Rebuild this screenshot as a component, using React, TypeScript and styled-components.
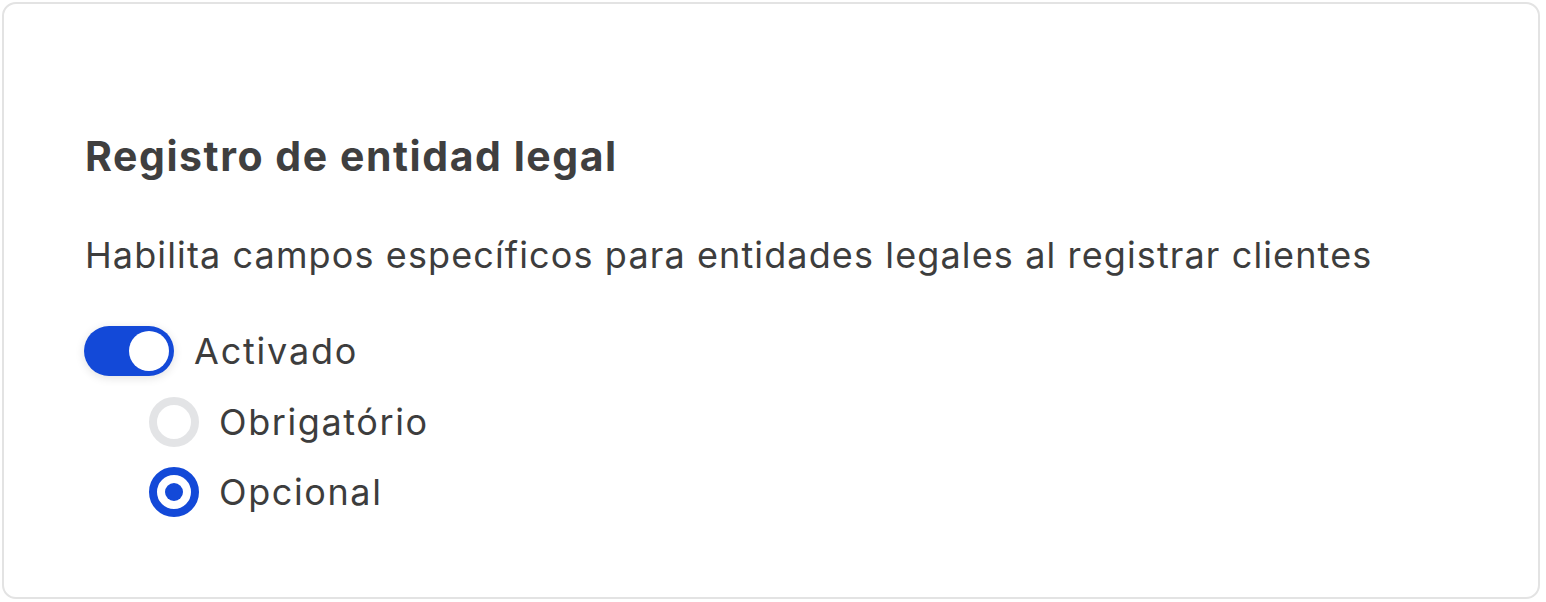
import React from "react";
import styled, { createGlobalStyle } from "styled-components";

const Global = createGlobalStyle`
  html, body { margin: 0; padding: 0; background: #ffffff; }
  body { font-family: Inter, "Noto Sans", sans-serif; color: #3d3d3d; }
`;

const Page = styled.div`
  padding: 2px 6px 3px 2px;
`;

const Card = styled.section`
  box-sizing: border-box;
  height: 597px;
  border: 2px solid #e3e3e3;
  border-radius: 14px;
  background: #ffffff;
  padding: 128px 80px 0 81px;
  display: flex;
  flex-direction: column;
`;

const Title = styled.h2`
  margin: 0;
  font-size: 41px;
  line-height: 48px;
  font-weight: 700;
  color: #3f3f3f;
  letter-spacing: 1.55px;
`;

const Description = styled.p`
  margin: 53px 0 0 0;
  font-size: 36px;
  line-height: 44px;
  font-weight: 400;
  color: #3d3d3d;
  letter-spacing: 1.12px;
`;

const ToggleRow = styled.label`
  margin-top: 49px;
  margin-left: -1px;
  display: flex;
  align-items: center;
  gap: 20px;
  font-size: 36px;
  line-height: 44px;
  letter-spacing: 1.8px;
`;

const Track = styled.span<{ $on: boolean }>`
  position: relative;
  width: 90px;
  height: 50px;
  border-radius: 25px;
  background: ${(p) => (p.$on ? "#1349d8" : "#d6d7da")};
  box-shadow: 0 2px 10px rgba(0, 0, 0, 0.12);
  flex-shrink: 0;
`;

const Thumb = styled.span<{ $on: boolean }>`
  position: absolute;
  top: 5px;
  left: ${(p) => (p.$on ? "45px" : "5px")};
  width: 40px;
  height: 40px;
  border-radius: 50%;
  background: #ffffff;
`;

const Options = styled.div`
  margin-top: 21px;
  padding-left: 64px;
  display: flex;
  flex-direction: column;
  gap: 20px;
`;

const OptionRow = styled.label`
  display: flex;
  align-items: center;
  gap: 20px;
  font-size: 36px;
  line-height: 50px;
  letter-spacing: 1.6px;
`;

const Radio = styled.span<{ $checked: boolean }>`
  box-sizing: border-box;
  width: 50px;
  height: 50px;
  border-radius: 50%;
  border: 8px solid ${(p) => (p.$checked ? "#1349d8" : "#e3e4e6")};
  background: #ffffff;
  display: flex;
  align-items: center;
  justify-content: center;
  flex-shrink: 0;
  &::after {
    content: "";
    display: ${(p) => (p.$checked ? "block" : "none")};
    width: 18px;
    height: 18px;
    border-radius: 50%;
    background: #1349d8;
  }
`;

const options = [
  { label: "Obrigatório", checked: false },
  { label: "Opcional", checked: true },
];

export default function App() {
  return (
    <>
      <Global />
      <Page>
        <Card>
          <Title>Registro de entidad legal</Title>
          <Description>
            Habilita campos específicos para entidades legales al registrar clientes
          </Description>
          <ToggleRow>
            <Track $on>
              <Thumb $on />
            </Track>
            Activado
          </ToggleRow>
          <Options>
            {options.map((o) => (
              <OptionRow key={o.label}>
                <Radio $checked={o.checked} />
                {o.label}
              </OptionRow>
            ))}
          </Options>
        </Card>
      </Page>
    </>
  );
}
